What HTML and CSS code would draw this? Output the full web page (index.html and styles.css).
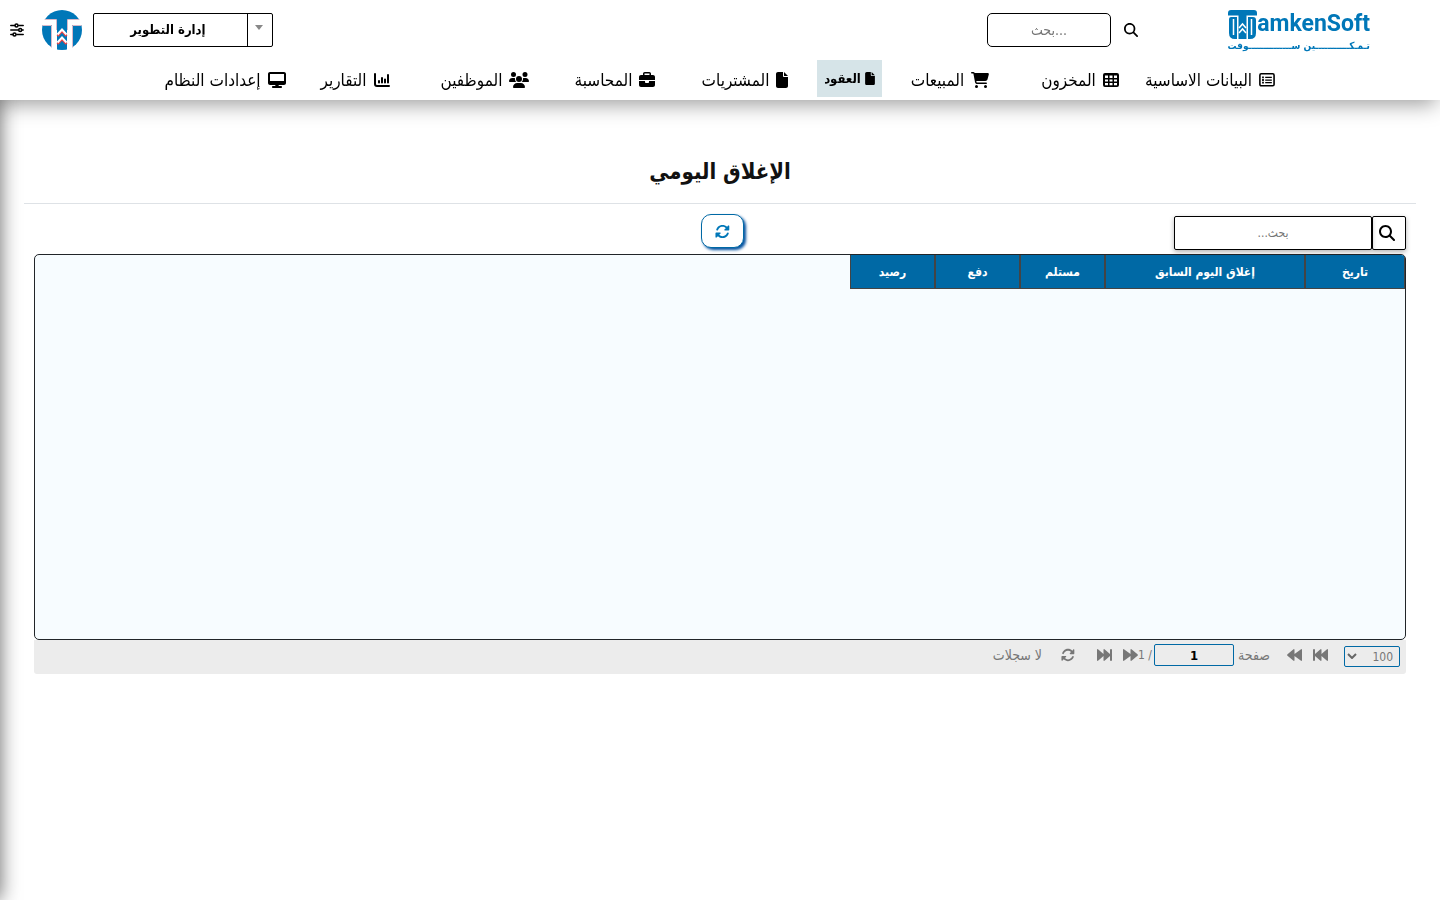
FILE: index.html
```html
<!DOCTYPE html>
<html lang="ar" dir="rtl">
<head>
    <meta charset="UTF-8">
    <meta name="viewport" content="width=device-width, initial-scale=1.0">
    <title>الإغلاق اليومي</title>
    <link rel="stylesheet" href="styles.css">
</head>
<body>
    <svg class="sprite" aria-hidden="true">
        <symbol id="i-search" viewBox="0 0 512 512"><path d="M416 208c0 45.900-14.900 88.300-40 122.700L502.600 457.400c12.500 12.500 12.500 32.800 0 45.300s-32.800 12.500-45.300 0L330.700 376c-34.400 25.200-76.800 40-122.700 40C93.100 416 0 322.900 0 208S93.100 0 208 0S416 93.100 416 208zM208 352a144 144 0 1 0 0-288 144 144 0 1 0 0 288z"/></symbol>
        <symbol id="i-file" viewBox="0 0 384 512"><path d="M0 64C0 28.700 28.700 0 64 0H224V128c0 17.700 14.300 32 32 32H384V448c0 35.300-28.700 64-64 64H64c-35.300 0-64-28.700-64-64V64zm384 64H256V0L384 128z"/></symbol>
        <symbol id="i-refresh" viewBox="0 0 512 512"><path d="M142.900 142.900c62.200-62.200 162.700-62.500 225.300-1L327 183c-6.900 6.900-8.900 17.200-5.200 26.200s12.500 14.800 22.200 14.800H463.500c13.300 0 24-10.700 24-24V72c0-9.700-5.800-18.500-14.800-22.200s-19.300-1.700-26.200 5.200L413.400 96.600c-87.600-86.500-228.700-86.200-315.800 1C73.200 122 55.600 150.700 44.800 181.400c-5.900 16.700 2.900 34.900 19.500 40.800s34.900-2.900 40.800-19.500c7.700-21.800 20.200-42.300 37.800-59.800zM16 312v128c0 9.700 5.800 18.500 14.800 22.200s19.300 1.700 26.200-5.200l41.600-41.600c87.600 86.500 228.700 86.200 315.800-1c24.400-24.400 42.100-53.100 52.900-83.700c5.900-16.700-2.900-34.900-19.500-40.800s-34.900 2.900-40.800 19.500c-7.700 21.800-20.200 42.300-37.800 59.800c-62.200 62.200-162.700 62.500-225.300 1L185 329c6.900-6.900 8.900-17.200 5.200-26.200s-12.500-14.800-22.200-14.800H40c-13.300 0-24 10.700-24 24z"/></symbol>
        <symbol id="i-next" viewBox="0 0 15 12"><path d="M0 1q0-1.500 1.300-.6L7.500 5V1q0-1.500 1.300-.6l5.700 4.800q.8.800 0 1.600L8.800 11.600Q7.500 12.500 7.500 11V7l-6.200 4.600Q0 12.500 0 11z"/></symbol>
        <symbol id="i-last" viewBox="0 0 15 12"><path d="M0 1q0-1.500 1.300-.6L6.500 5V1q0-1.500 1.300-.6L13 5V1q0-1 1-1t1 1v10q0 1-1 1t-1-1V7l-5.200 4.600Q6.500 12.500 6.500 11V7l-5.200 4.600Q0 12.500 0 11z"/></symbol>
    </svg>

    <aside class="sidebar"></aside>

    <header class="header">
        <div class="topbar">
            <a href="#" class="logo" aria-label="TamkenSoft">
                <span class="logo-main">
                    <svg width="29" height="29" viewBox="0 0 29 29"><path fill="#0077b8" d="M3 0h23q3 0 3 3v2.500H18.500V29h-8V5.500H0V3q0-3 3-3z"/><path fill="#0077b8" d="M1 9q0-2 2-2h6v22H7q-6 0-6-6zM20 7h5q3 0 3 3v13q0 6-6 6h-2z"/><path stroke="#fff" stroke-width="1.500" d="M5.500 9v16M23.500 9v16"/><path fill="none" stroke="#fff" stroke-width="1.500" d="M11 18l3.500-4 3.500 4M11 23l3.500-4 3.500 4"/></svg>
                    <span class="logo-name" dir="ltr">amkenSoft</span>
                </span>
                <span class="logo-sub">تـمـكـــــــــــين ســــــــــــــوفت</span>
            </a>
            <div class="search">
                <svg class="icon"><use href="#i-search"/></svg>
                <input type="text" dir="ltr" placeholder="بحث..." aria-label="بحث">
            </div>
            <div class="account">
                <div class="company">
                    <select aria-label="الشركة"><option>إدارة التطوير</option></select>
                </div>
                <svg class="avatar" viewBox="0 0 40 40">
                    <defs><clipPath id="round"><circle cx="20" cy="20" r="20"/></clipPath></defs>
                    <g clip-path="url(#round)">
                        <path fill="#0077b8" d="M0 0h40v10H25v30H15V10H0z"/>
                        <path fill="#0077b8" d="M0 15h10v25H0zM30 15h10v25H30z"/>
                        <path fill="none" stroke="#d9b8c8" d="M0 15.500h9.500V40M40 15.500h-9.500V40M0 9.500h14.500V20M40 9.500H25.500V20"/>
                        <path fill="none" stroke="#e44" stroke-width="2.500" d="M15.500 26l4.500-5 4.500 5M15.500 34l4.500-5 4.500 5"/>
                        <path fill="none" stroke="#fff" stroke-width="2" d="M15.500 24.500l4.500-5 4.500 5M15.500 32.500l4.500-5 4.500 5"/>
                    </g>
                </svg>
                <button type="button" class="settings" aria-label="الإعدادات">
                    <svg width="14" height="14" viewBox="0 0 14 14" fill="none" stroke="#000" stroke-width="1.500" stroke-linecap="round"><path d="M.8 2.500h4M8.800 2.500h4.400M.8 7h7.400M12.200 7h1M.8 11.500h2M6.800 11.500h6.400"/><circle cx="6.500" cy="2.500" r="1.500"/><circle cx="10.200" cy="7" r="1.500"/><circle cx="4.500" cy="11.500" r="1.500"/></svg>
                </button>
            </div>
        </div>

        <nav class="nav">
            <a href="#">
                <svg width="18" height="18" viewBox="0 0 18 18"><rect x="1" y="2" width="16" height="13.500" rx="1.500" fill="none" stroke="#000" stroke-width="1.800"/><path d="M3.500 5h2v2h-2zM3.500 8h2v2h-2zM3.500 11h2v2h-2zM7 5.300h7.500v1.500H7zM7 8.300h7.500v1.500H7zM7 11.300h7.500v1.500H7z"/></svg>
                البيانات الاساسية
            </a>
            <a href="#">
                <svg width="16" height="16" viewBox="0 0 16 16"><path fill-rule="evenodd" d="M2 1h12q2 0 2 2v10q0 2-2 2H2q-2 0-2-2V3q0-2 2-2zM2 3.500V6h3V3.500zM6.500 3.500V6h3V3.500zM11 3.500V6h3V3.500zM2 7.500v2h3v-2zM6.500 7.500v2h3v-2zM11 7.500v2h3v-2zM2 11v2.200h3V11zM6.500 11v2.200h3V11zM11 11v2.200h3V11z"/></svg>
                المخزون
            </a>
            <a href="#">
                <svg width="18" height="16" viewBox="0 0 576 512"><path d="M0 24C0 10.700 10.700 0 24 0H69.500c22 0 41.500 12.800 50.600 32h411c26.300 0 45.500 25 38.600 50.400l-41 152.300c-8.500 31.400-37 53.300-69.500 53.300H170.700l5.400 28.500c2.200 11.300 12.100 19.500 23.600 19.500H488c13.300 0 24 10.700 24 24s-10.700 24-24 24H199.700c-34.600 0-64.300-24.600-70.700-58.500L77.400 54.500c-.7-3.800-4-6.500-7.900-6.500H24C10.700 48 0 37.300 0 24zM128 464a48 48 0 1 1 96 0 48 48 0 1 1-96 0zm336-48a48 48 0 1 1 0 96 48 48 0 1 1 0-96z"/></svg>
                المبيعات
            </a>
            <button type="button" class="active">
                <svg width="10" height="13"><use href="#i-file"/></svg>
                العقود
            </button>
            <a href="#">
                <svg width="12" height="16"><use href="#i-file"/></svg>
                المشتريات
            </a>
            <a href="#">
                <svg width="16" height="16" viewBox="0 0 512 512"><path d="M184 48H328c4.400 0 8 3.600 8 8V96H176V56c0-4.400 3.600-8 8-8zm-56 8V96H64C28.700 96 0 124.700 0 160v96H512V160c0-35.300-28.700-64-64-64H384V56c0-30.900-25.100-56-56-56H184c-30.900 0-56 25.100-56 56zM512 288H320v32c0 17.700-14.300 32-32 32H224c-17.700 0-32-14.300-32-32V288H0V416c0 35.300 28.700 64 64 64H448c35.300 0 64-28.700 64-64V288z"/></svg>
                المحاسبة
            </a>
            <a href="#">
                <svg width="20" height="16" viewBox="0 0 640 512"><path d="M144 0a80 80 0 1 1 0 160A80 80 0 1 1 144 0zM512 0a80 80 0 1 1 0 160A80 80 0 1 1 512 0zM0 298.700C0 239.800 47.800 192 106.700 192h42.700c15.900 0 31 3.500 44.600 9.700c-1.300 7.200-1.900 14.700-1.900 22.300c0 38.200 16.800 72.500 43.300 96H21.300C9.600 320 0 310.400 0 298.700zM405.300 320h-.7c26.600-23.500 43.300-57.800 43.300-96c0-7.600-.7-15-1.900-22.300c13.600-6.300 28.700-9.700 44.600-9.700h42.700C592.200 192 640 239.800 640 298.700c0 11.800-9.600 21.300-21.300 21.300H405.300zM224 224a96 96 0 1 1 192 0 96 96 0 1 1-192 0zM128 485.300C128 411.700 187.700 352 261.300 352H378.700C452.300 352 512 411.700 512 485.300c0 14.700-11.900 26.700-26.700 26.700H154.700c-14.700 0-26.700-11.900-26.700-26.700z"/></svg>
                الموظفين
            </a>
            <a href="#">
                <svg width="16" height="16" viewBox="0 0 16 16" fill="none" stroke="#000" stroke-width="2" stroke-linecap="round"><path d="M1 2v10q0 2 2 2h12M5 9v1.500M8 6v4.500M11 7.500v3M14 3v7.500"/></svg>
                التقارير
            </a>
            <a href="#">
                <svg width="18" height="16" viewBox="0 0 576 512"><path d="M64 0C28.700 0 0 28.700 0 64V352c0 35.300 28.700 64 64 64H240l-10.700 32H160c-17.700 0-32 14.300-32 32s14.300 32 32 32H416c17.700 0 32-14.300 32-32s-14.300-32-32-32H346.700L336 416H512c35.300 0 64-28.700 64-64V64c0-35.300-28.700-64-64-64H64zM512 64V288H64V64H512z"/></svg>
                إعدادات النظام
            </a>
        </nav>
    </header>

    <main class="content">
        <h1>الإغلاق اليومي</h1>

        <div class="panel">
            <div class="toolbar">
                <div class="grid-search">
                    <button type="button" aria-label="بحث"><svg class="icon"><use href="#i-search"/></svg></button>
                    <input type="text" placeholder="بحث..." aria-label="بحث في الجدول">
                </div>
                <button type="button" class="refresh" aria-label="تحديث"><svg class="icon"><use href="#i-refresh"/></svg></button>
            </div>

            <div class="grid">
                <table>
                    <thead>
                        <tr>
                            <th class="col-date">تاريخ</th>
                            <th class="col-close">إغلاق اليوم السابق</th>
                            <th>مستلم</th>
                            <th>دفع</th>
                            <th>رصيد</th>
                        </tr>
                    </thead>
                </table>
            </div>

            <div class="pager">
                <div class="page-size">
                    <select aria-label="عدد السجلات"><option>100</option></select>
                    <svg width="10" height="6" viewBox="0 0 10 6" fill="none" stroke="#666" stroke-width="2"><path d="M1 1l4 4 4-4"/></svg>
                </div>
                <button type="button" class="flip" aria-label="الأولى"><svg><use href="#i-last"/></svg></button>
                <button type="button" class="flip" aria-label="السابق"><svg><use href="#i-next"/></svg></button>
                <label for="page">صفحة</label>
                <input type="text" id="page" value="1">
                <span class="total">/ 1</span>
                <button type="button" aria-label="التالي"><svg><use href="#i-next"/></svg></button>
                <button type="button" aria-label="الأخيرة"><svg><use href="#i-last"/></svg></button>
                <button type="button" class="reload" aria-label="تحديث الجدول"><svg><use href="#i-refresh"/></svg></button>
                <span class="records">لا سجلات</span>
            </div>
        </div>
    </main>
</body>
</html>
```
FILE: styles.css
```css
* {
    box-sizing: border-box;
}

body {
    margin: 0;
    background-color: #fff;
    color: #000;
    font-family: 'DejaVu Sans Condensed', 'DejaVu Sans', sans-serif;
    font-size: 14px;
    overflow-x: hidden;
}

button, input, select {
    font-family: inherit;
    margin: 0;
    padding: 0;
}

button {
    cursor: pointer;
}

.sprite {
    position: absolute;
    width: 0;
    height: 0;
}

.icon {
    width: 16px;
    height: 16px;
}

/* closed side menu, only its shadow shows */
.sidebar {
    position: fixed;
    top: 0;
    bottom: 0;
    left: -60px;
    width: 60px;
    box-shadow: 0 0 20px rgba(0, 0, 0, 0.6);
}

/* header */
.header {
    position: relative;
    background-color: #fff;
    box-shadow: -4px 4px 20px rgba(0, 0, 0, 0.4);
}

.topbar {
    display: flex;
    align-items: center;
    height: 60px;
    padding: 0 70px 0 10px;
}

.logo {
    display: flex;
    flex-direction: column;
    width: 142px;
    height: 44px;
    color: #0077b8;
    text-decoration: none;
}

.logo-main {
    display: flex;
    flex-direction: row-reverse;
    justify-content: flex-end;
    align-items: center;
    height: 32px;
}

.logo-main svg {
    flex-shrink: 0;
}

.logo-name {
    font-family: Roboto, 'Liberation Sans', sans-serif;
    font-size: 23px;
    font-weight: bold;
    line-height: 32px;
}

.logo-sub {
    font-size: 10px;
    font-weight: bold;
    line-height: 12px;
    white-space: nowrap;
}

.search {
    display: flex;
    align-items: center;
    gap: 13px;
    margin-right: 90px;
}

.search .icon {
    width: 14px;
    height: 14px;
}

.search input {
    width: 124px;
    height: 34px;
    border: 1px solid #000;
    border-radius: 5px;
    font-size: 14px;
    text-align: center;
}

.account {
    display: flex;
    align-items: center;
    gap: 11px;
    margin-right: auto;
}

.company {
    position: relative;
    width: 180px;
    height: 34px;
    border: 1px solid #000;
    border-radius: 2px;
}

.company select {
    width: 100%;
    height: 100%;
    padding: 0 30px 0 0;
    border: none;
    background: none;
    appearance: none;
    color: #000;
    font-size: 13px;
    font-weight: bold;
    line-height: 24px;
    text-align: center;
    text-align-last: center;
}

.company::before {
    content: "";
    position: absolute;
    top: 0;
    bottom: 0;
    right: 24px;
    border-right: 1px solid #000;
}

.company::after {
    content: "";
    position: absolute;
    top: 11px;
    right: 9px;
    border: 4px solid transparent;
    border-top: 5px solid #888;
    border-bottom: none;
}

.avatar {
    width: 40px;
    height: 40px;
}

.settings {
    display: flex;
    margin-right: 7px;
    border: none;
    background: none;
}

.nav {
    display: flex;
    justify-content: center;
    height: 40px;
    padding-right: 5px;
}

.nav a {
    display: flex;
    justify-content: center;
    align-items: center;
    gap: 7px;
    width: 130px;
    color: #000;
    font-size: 17px;
    text-decoration: none;
    white-space: nowrap;
}

.nav .active {
    display: flex;
    justify-content: center;
    align-items: center;
    gap: 4px;
    width: 65px;
    height: 37px;
    margin: 0 3px 0 7px;
    border: none;
    background-color: #d6e4e8;
    color: #000;
    font-size: 13px;
    font-weight: bold;
}

/* page */
.content {
    padding: 54px 24px 24px;
}

h1 {
    margin: 0;
    padding-bottom: 14px;
    border-bottom: 1px solid #dee2e6;
    color: #111;
    font-size: 22px;
    line-height: 35px;
    text-align: center;
}

.panel {
    padding: 10px 10px 0;
}

.toolbar {
    display: grid;
    grid-template-columns: 1fr auto 1fr;
    height: 40px;
}

.grid-search {
    display: flex;
    padding-top: 2px;
}

.grid-search button {
    display: flex;
    justify-content: center;
    align-items: center;
    width: 34px;
    height: 34px;
    padding-right: 4px;
    border: 1px solid #000;
    border-radius: 2px;
    background-color: #fff;
    box-shadow: 0 2px 5px rgba(0, 0, 0, 0.3);
}

.grid-search input {
    width: 198px;
    height: 34px;
    border: 1px solid #000;
    border-radius: 2px;
    font-size: 12px;
    text-align: center;
    box-shadow: 0 2px 5px rgba(0, 0, 0, 0.3);
}

.refresh {
    display: flex;
    justify-content: center;
    align-items: center;
    width: 43px;
    height: 34px;
    margin-left: 4px;
    border: 1px solid #0069a5;
    border-radius: 10px;
    background-color: #fff;
    box-shadow: 2px 2px 3px #0050a0;
}

.refresh .icon {
    width: 15px;
    height: 15px;
    fill: #0077b8;
}

.grid {
    min-height: 386px;
    border: 1px solid #212529;
    border-radius: 5px;
    background-color: #f7fcff;
    overflow: hidden;
}

table {
    border-collapse: separate;
    border-spacing: 0;
    table-layout: fixed;
    width: 555px;
}

th {
    width: 85px;
    height: 34px;
    padding: 0;
    border: 1px solid #444;
    border-top: none;
    background-color: #0069a5;
    color: #fff;
    font-size: 12px;
    text-align: center;
    white-space: nowrap;
}

.col-date {
    width: 100px;
}

.col-close {
    width: 200px;
}

.pager {
    display: flex;
    align-items: center;
    height: 34px;
    padding: 0 6px 4px;
    border-radius: 0 0 3px 3px;
    background-color: #ececec;
    color: #777;
    font-size: 12px;
}

.page-size {
    position: relative;
    margin-left: 16px;
}

.page-size select {
    display: block;
    width: 56px;
    height: 21px;
    margin-top: 3px;
    padding-right: 6px;
    border: 1px solid #0069a5;
    border-radius: 2px;
    background: none;
    appearance: none;
    color: #777;
    font-size: 12px;
}

.page-size svg {
    position: absolute;
    top: 10px;
    left: 3px;
}

.pager button {
    display: flex;
    margin-left: 11px;
    border: none;
    background: none;
}

.pager button svg {
    width: 15px;
    height: 12px;
    fill: #777;
}

.pager .flip svg {
    transform: scaleX(-1);
}

.pager label {
    width: 34px;
    margin: 0 6px 0 2px;
    font-size: 14px;
    white-space: nowrap;
}

.pager input {
    width: 80px;
    height: 22px;
    border: 1px solid #0069a5;
    border-radius: 2px;
    background: none;
    color: #000;
    font-size: 13px;
    font-weight: bold;
    text-align: center;
}

.total {
    margin-right: 2px;
}

.pager .reload {
    margin: 0 11px 0 15px;
}

.pager .reload svg {
    width: 14px;
    height: 14px;
}

.records {
    margin-right: 4px;
    font-size: 14px;
}
```
